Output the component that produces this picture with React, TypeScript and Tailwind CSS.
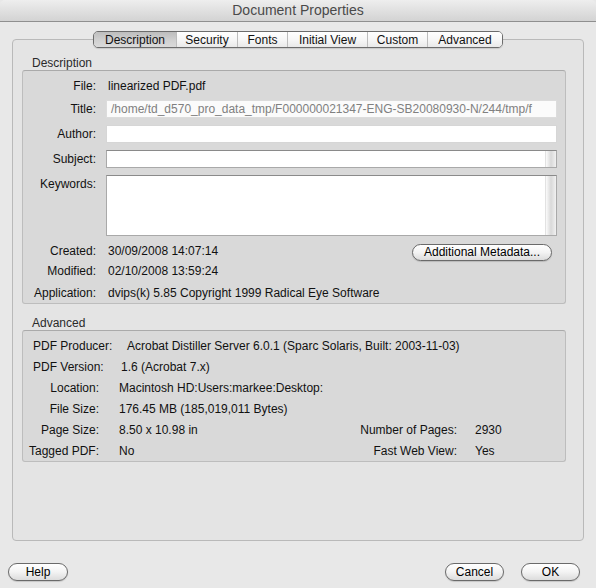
import React from 'react'

const tabs = [
  { name: 'Description', w: 'w-[82px]' },
  { name: 'Security', w: 'w-[61px]' },
  { name: 'Fonts', w: 'w-[50px]' },
  { name: 'Initial View', w: 'w-[80px]' },
  { name: 'Custom', w: 'w-[60px]' },
  { name: 'Advanced', w: 'w-[75px]' },
]

function PillButton({ label, className }: { label: string; className?: string }) {
  return (
    <div
      className={`flex items-center justify-center rounded-full border border-[#6a6a6a] bg-gradient-to-b from-[#ffffff] via-[#f3f3f3] to-[#dcdcdc] text-[12px] text-black shadow-[0_1px_1px_rgba(0,0,0,0.15)] ${className ?? ''}`}
    >
      {label}
    </div>
  )
}

function ScrollStrip() {
  return (
    <div className="ml-auto h-full w-[11px] border-l border-[#e2e2e2] bg-gradient-to-r from-[#fbfbfb] via-[#d9d9d9] to-[#f1f1f1]" />
  )
}

function InfoRow({ label, value }: { label: string; value: string }) {
  return (
    <div className="flex h-[16px] items-center">
      <div className="w-[73px] text-right">{label}</div>
      <div className="pl-[12px]">{value}</div>
    </div>
  )
}

function AdvLabel({ children }: { children: React.ReactNode }) {
  return (
    <div className="flex w-[66px] shrink-0 justify-end whitespace-nowrap">
      <span>{children}</span>
    </div>
  )
}

export default function App() {
  return (
    <div className="flex h-[588px] w-[596px] flex-col overflow-hidden bg-[#e8e8e8] font-['Liberation_Sans',Arial,sans-serif] text-[12px] text-[#111]">
      {/* Title bar */}
      <div className="flex h-[22px] items-center justify-center rounded-t-[5px] border-b border-[#8f8f8f] bg-gradient-to-b from-[#eeeeee] to-[#d3d3d3] text-[14px] text-[#4a4a4a]">
        Document Properties
      </div>

      <div className="px-[12px] pt-[9px]">
        {/* Tabs */}
        <div className="relative z-10 flex justify-center">
          <div className="flex h-[17px] overflow-hidden rounded-[5px] border border-[#6c6c6c] shadow-[0_1px_1px_rgba(0,0,0,0.12)]">
            {tabs.map((t, i) => (
              <div
                key={t.name}
                className={`flex items-center justify-center ${t.w} ${
                  i > 0 ? 'border-l border-[#bdbdbd]' : ''
                } ${
                  i === 0
                    ? 'bg-gradient-to-b from-[#bdbdbd] via-[#cfcfcf] to-[#dadada]'
                    : 'bg-gradient-to-b from-[#ffffff] via-[#f7f7f7] to-[#e9e9e9]'
                }`}
              >
                {t.name}
              </div>
            ))}
          </div>
        </div>

        {/* Tab panel */}
        <div className="-mt-[9px] h-[502px] rounded-[4px] border border-[#b9b9b9] bg-[#e4e4e4]">
          <div className="pl-[19px] pt-[16px] leading-[14px] text-[#2a2a2a]">Description</div>
          <div className="ml-[9px] mr-[17px] box-border h-[234px] rounded-[3px] border border-[#bdbdbd] border-t-[#aaaaaa] bg-[#d9d9d9]">
            <div className="mt-[7px]">
              <InfoRow label="File:" value="linearized PDF.pdf" />
            </div>

            <div className="mt-[6px] flex h-[18px] items-center">
              <div className="w-[73px] text-right">Title:</div>
              <div className="ml-[10px] mr-[8px] flex h-full flex-1 items-center overflow-hidden whitespace-nowrap border border-[#dcdcdc] bg-[#fbfbfb] pl-[4px] text-[#808080]">
                /home/td_d570_pro_data_tmp/F000000021347-ENG-SB20080930-N/244/tmp/f
              </div>
            </div>

            <div className="mt-[7px] flex h-[18px] items-center">
              <div className="w-[73px] text-right">Author:</div>
              <div className="ml-[10px] mr-[8px] h-full flex-1 border border-[#d6d6d6] bg-white" />
            </div>

            <div className="mt-[7px] flex h-[18px] items-center">
              <div className="w-[73px] text-right">Subject:</div>
              <div className="ml-[10px] mr-[8px] flex h-full flex-1 border border-[#a9a9a9] border-t-[#8a8a8a] bg-white">
                <ScrollStrip />
              </div>
            </div>

            <div className="mt-[7px] flex h-[61px] items-start">
              <div className="w-[73px] text-right">Keywords:</div>
              <div className="ml-[10px] mr-[8px] flex h-full flex-1 border border-[#a9a9a9] border-t-[#8a8a8a] bg-white">
                <ScrollStrip />
              </div>
            </div>

            <div className="mt-[7px] flex h-[16px] items-center">
              <div className="w-[73px] text-right">Created:</div>
              <div className="pl-[12px]">30/09/2008 14:07:14</div>
              <PillButton
                label="Additional Metadata..."
                className="relative top-[1px] ml-auto mr-[13px] h-[17px] w-[140px]"
              />
            </div>
            <div className="mt-[4px]">
              <InfoRow label="Modified:" value="02/10/2008 13:59:24" />
            </div>
            <div className="mt-[6px]">
              <InfoRow label="Application:" value="dvips(k) 5.85 Copyright 1999 Radical Eye Software" />
            </div>
          </div>

          <div className="mt-[12px] pl-[19px] leading-[14px] text-[#2a2a2a]">Advanced</div>
          <div className="ml-[9px] mr-[17px] box-border flex h-[132px] flex-col gap-[5px] rounded-[3px] border border-[#bdbdbd] border-t-[#aaaaaa] bg-[#d9d9d9] pl-[10px] pt-[7px] whitespace-nowrap">
            <div className="flex h-[16px] items-center">
              <div className="w-[94px]">PDF Producer:</div>
              <div>Acrobat Distiller Server 6.0.1 (Sparc Solaris, Built: 2003-11-03)</div>
            </div>
            <div className="flex h-[16px] items-center">
              <div className="w-[88px]">PDF Version:</div>
              <div>1.6 (Acrobat 7.x)</div>
            </div>
            <div className="flex h-[16px] items-center">
              <AdvLabel>Location:</AdvLabel>
              <div className="pl-[20px]">Macintosh HD:Users:markee:Desktop:</div>
            </div>
            <div className="flex h-[16px] items-center">
              <AdvLabel>File Size:</AdvLabel>
              <div className="pl-[20px]">176.45 MB (185,019,011 Bytes)</div>
            </div>
            <div className="flex h-[16px] items-center">
              <AdvLabel>Page Size:</AdvLabel>
              <div className="w-[228px] pl-[20px]">8.50 x 10.98 in</div>
              <div className="w-[130px] text-right">Number of Pages:</div>
              <div className="pl-[18px]">2930</div>
            </div>
            <div className="flex h-[16px] items-center">
              <AdvLabel>Tagged PDF:</AdvLabel>
              <div className="w-[228px] pl-[20px]">No</div>
              <div className="w-[130px] text-right">Fast Web View:</div>
              <div className="pl-[18px]">Yes</div>
            </div>
          </div>
        </div>
      </div>

      {/* Bottom buttons */}
      <div className="mt-[22px] flex items-center pl-[8px] pr-[16px]">
        <PillButton label="Help" className="h-[18px] w-[60px]" />
        <PillButton label="Cancel" className="ml-auto h-[18px] w-[59px]" />
        <PillButton label="OK" className="ml-[17px] h-[18px] w-[59px]" />
      </div>
    </div>
  )
}
